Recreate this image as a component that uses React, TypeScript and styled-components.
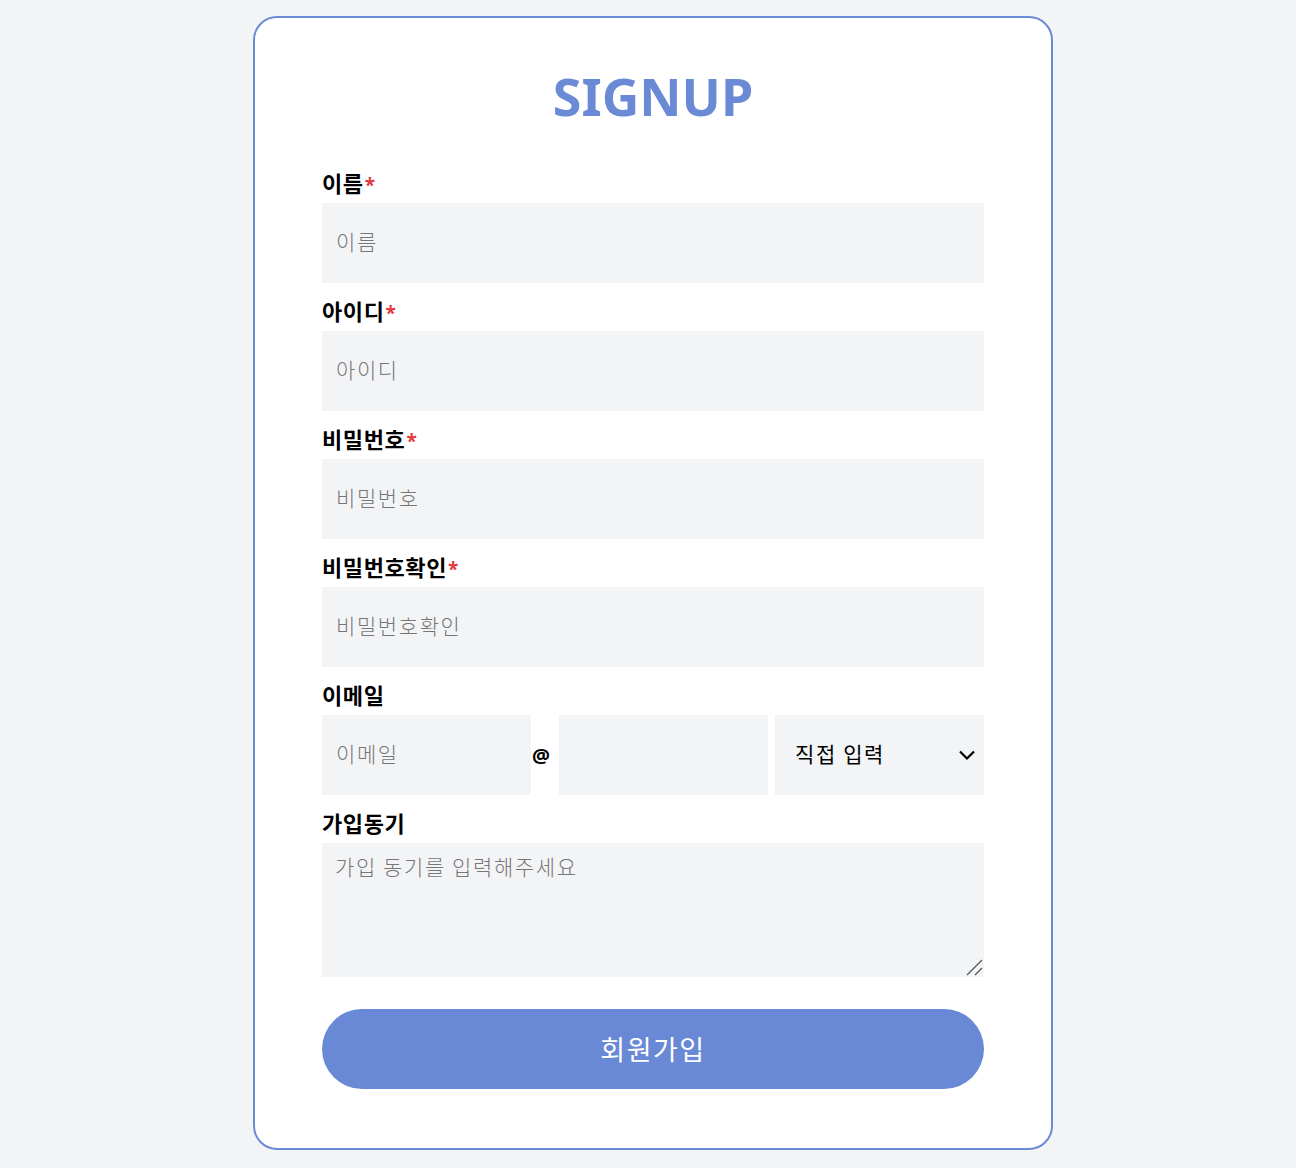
import React from "react";
import styled, { createGlobalStyle } from "styled-components";

const Global = createGlobalStyle`
  html, body { margin: 0; padding: 0; background: #f3f4f6; }
  body { font-family: "Noto Sans", "Noto Sans CJK KR", sans-serif; }
  * { box-sizing: border-box; }
`;

const Page = styled.div`
  display: flex;
  justify-content: center;
  padding: 16px 0 19px 10px;
`;

const Card = styled.form`
  width: 800px;
  background: #ffffff;
  border: 2px solid #6a8ad6;
  border-radius: 24px;
  padding: 47px 67px 59px;
  display: flex;
  flex-direction: column;
`;

const Title = styled.h1`
  margin: 0 0 41px;
  text-align: center;
  font-family: "Noto Sans", sans-serif;
  font-weight: 700;
  font-size: 52px;
  line-height: 62px;
  color: #6a8ad6;
`;

const Field = styled.div`
  display: flex;
  flex-direction: column;
  gap: 7px;
  margin-bottom: 13px;
`;

const Label = styled.label`
  display: block;
  height: 28px;
  font-family: "Noto Sans CJK KR", sans-serif;
  font-weight: 700;
  font-size: 22px;
  letter-spacing: 0.6px;
  line-height: 28px;
  color: #000;
`;

const Star = styled.span`
  color: #e0393e;
  font-family: "Noto Sans", sans-serif;
  font-size: 19px;
  font-weight: 700;
  line-height: 0;
  margin-left: 1px;
`;

const baseInput = `
  border: none;
  outline: none;
  background: #f3f4f6;
  font-family: "Noto Sans CJK KR", sans-serif;
  font-size: 21px;
  letter-spacing: 1.6px;
  color: #000;
  padding: 0 14px 4px;
  border-radius: 0;
  &::placeholder { color: #767676; font-weight: 300; }
`;

const Input = styled.input`
  ${baseInput}
  height: 80px;
  width: 100%;
`;

const EmailRow = styled.div`
  display: flex;
  align-items: center;
  height: 80px;
`;

const EmailInput = styled.input`
  ${baseInput}
  width: 209px;
  height: 80px;
`;

const At = styled.span`
  width: 28px;
  padding-left: 1px;
  font-family: "Noto Sans", sans-serif;
  font-weight: 700;
  font-size: 20px;
  color: #000;
`;

const SelectWrap = styled.div`
  position: relative;
  width: 209px;
  height: 80px;
  margin-left: 7px;
`;

const Select = styled.select`
  ${baseInput}
  appearance: none;
  width: 100%;
  height: 100%;
  padding-left: 20px;
`;

const Chevron = styled.svg`
  position: absolute;
  right: 8px;
  top: 34px;
  pointer-events: none;
`;

const AreaWrap = styled.div`
  position: relative;
  height: 134px;
`;

const TextArea = styled.textarea`
  ${baseInput}
  width: 100%;
  height: 134px;
  padding: 9px 13px;
  line-height: 28px;
  display: block;
  resize: none;
`;

const Grip = styled.svg`
  position: absolute;
  right: 1px;
  bottom: 1px;
  pointer-events: none;
`;

const Submit = styled.button`
  margin-top: 19px;
  height: 80px;
  width: 100%;
  border: none;
  border-radius: 40px;
  background: #6989d6;
  color: #fff;
  font-family: "Noto Sans CJK KR", sans-serif;
  font-size: 27px;
  letter-spacing: 1.5px;
  padding-bottom: 2px;
  cursor: pointer;
`;

export default function App() {
  return (
    <>
      <Global />
      <Page>
        <Card onSubmit={(e) => e.preventDefault()}>
          <Title>SIGNUP</Title>
          <Field>
            <Label>
              이름<Star>*</Star>
            </Label>
            <Input placeholder="이름" />
          </Field>
          <Field>
            <Label>
              아이디<Star>*</Star>
            </Label>
            <Input placeholder="아이디" />
          </Field>
          <Field>
            <Label>
              비밀번호<Star>*</Star>
            </Label>
            <Input type="password" placeholder="비밀번호" />
          </Field>
          <Field>
            <Label>
              비밀번호확인<Star>*</Star>
            </Label>
            <Input type="password" placeholder="비밀번호확인" />
          </Field>
          <Field>
            <Label>이메일</Label>
            <EmailRow>
              <EmailInput placeholder="이메일" />
              <At>@</At>
              <EmailInput />
              <SelectWrap>
                <Select defaultValue="direct">
                  <option value="direct">직접 입력</option>
                  <option value="naver">naver.com</option>
                  <option value="gmail">gmail.com</option>
                </Select>
                <Chevron width="18" height="12" viewBox="0 0 18 12">
                  <path d="M2 2.5 L9 9.5 L16 2.5" fill="none" stroke="#000" strokeWidth="2.2" />
                </Chevron>
              </SelectWrap>
            </EmailRow>
          </Field>
          <Field>
            <Label>가입동기</Label>
            <AreaWrap>
              <TextArea placeholder="가입 동기를 입력해주세요" />
              <Grip width="18" height="18" viewBox="0 0 18 18">
                <path d="M2 17 L17 2 M10 17 L17 10" stroke="#555" strokeWidth="1.3" fill="none" />
              </Grip>
            </AreaWrap>
          </Field>
          <Submit type="submit">회원가입</Submit>
        </Card>
      </Page>
    </>
  );
}
